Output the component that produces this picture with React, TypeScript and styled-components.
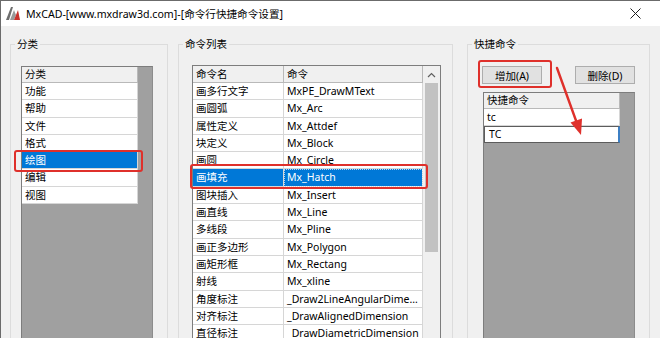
import styled, { createGlobalStyle } from 'styled-components';

const GlobalStyle = createGlobalStyle`
  html, body {
    margin: 0;
    padding: 0;
    background: #f0f0f0;
  }
  * {
    box-sizing: border-box;
  }
`;

const FONT = `"Noto Sans", "Noto Sans CJK SC", sans-serif`;

const Window = styled.div`
  position: relative;
  width: 660px;
  height: 338px;
  overflow: hidden;
  display: flex;
  flex-direction: column;
  background: #f0f0f0;
  border-top: 1px solid #6b6b6b;
  border-left: 1px solid #6b6b6b;
  font-family: ${FONT};
  font-size: 10.5px;
  color: #000;
`;

const TitleBar = styled.div`
  flex-shrink: 0;
  height: 25px;
  display: flex;
  align-items: center;
  padding-left: 4px;
  background: #fff;
`;

const TitleText = styled.span`
  margin-left: 5px;
  font-size: 10.6px;
  white-space: nowrap;
`;

const CloseIcon = styled.svg`
  margin-left: auto;
  margin-right: 19px;
`;

const Body = styled.div`
  display: flex;
  align-items: flex-start;
  padding: 11px 0 0 9px;
`;

const Group = styled.fieldset<{ $w: number; $mr: number }>`
  flex-shrink: 0;
  width: ${(p) => p.$w}px;
  height: 330px;
  margin: 0 ${(p) => p.$mr}px 0 0;
  padding: 0;
  min-width: 0;
  border: 1px solid #dcdcdc;
`;

const Legend = styled.legend`
  margin-left: 4px;
  padding: 0 2px;
  line-height: 14px;
  font-size: 10.5px;
`;

const GroupInner = styled.div<{ $pt: number; $pl: number }>`
  display: flex;
  flex-direction: column;
  align-items: flex-start;
  padding: ${(p) => p.$pt}px 0 0 ${(p) => p.$pl}px;
`;

const Grid = styled.div<{ $w: number }>`
  width: ${(p) => p.$w}px;
  height: 320px;
  background: #a0a0a0;
  border: 1px solid #7d7d7d;
  border-right-color: #8c8c8c;
`;

const GridRow = styled.div<{ $w: number }>`
  display: flex;
  width: ${(p) => p.$w}px;
`;

const Cell = styled.div<{ $w?: number; $h?: number; $head?: boolean; $sel?: boolean; $focus?: boolean }>`
  flex: ${(p) => (p.$w ? `0 0 ${p.$w}px` : '1 1 auto')};
  height: ${(p) => p.$h ?? 17.3}px;
  line-height: ${(p) => (p.$h ?? 17.3) - 1}px;
  padding-left: 3px;
  white-space: nowrap;
  overflow: hidden;
  text-overflow: ellipsis;
  background: ${(p) => (p.$head ? '#f0f0f0' : p.$sel ? '#0078d7' : '#fff')};
  color: ${(p) => (p.$sel ? '#fff' : '#000')};
  border-right: 1px solid ${(p) => (p.$head ? '#b9b9b9' : '#d6d6d6')};
  border-bottom: 1px solid ${(p) => (p.$head ? '#b9b9b9' : '#d6d6d6')};
  outline: ${(p) => (p.$focus ? '1px dotted rgba(255,255,255,0.7)' : 'none')};
  outline-offset: -1px;
`;

const EditCell = styled.div`
  flex: 1 1 auto;
  height: 17px;
  line-height: 15px;
  padding-left: 4px;
  background: #fff;
  border: 1px solid #5c5c5c;
  border-right: 2px solid #3c7fc4;
`;

const TableWrap = styled.div`
  display: flex;
  width: 249px;
  height: 320px;
  background: #fff;
  border: 1px solid #7d7d7d;
`;

const Table = styled.div`
  width: 230px;
  display: flex;
  flex-direction: column;
`;

const ScrollBar = styled.div`
  width: 17px;
  display: flex;
  flex-direction: column;
  align-items: center;
  background: #f0f0f0;
`;

const ScrollArrow = styled.div`
  height: 17px;
  display: flex;
  align-items: center;
  justify-content: center;
`;

const Thumb = styled.div`
  width: 13px;
  height: 169px;
  background: #c2c2c2;
`;

const ButtonRow = styled.div`
  display: flex;
  gap: 33px;
`;

const Button = styled.button`
  width: 60px;
  height: 18px;
  padding: 0;
  background: #e1e1e1;
  border: 1px solid #adadad;
  font-family: ${FONT};
  font-size: 10.5px;
  color: #000;
`;

const ShortcutList = styled(Grid)`
  margin: 8px 0 0 1px;
`;

const RedBox = styled.div<{ $x: number; $y: number; $w: number; $h: number }>`
  position: absolute;
  left: ${(p) => p.$x}px;
  top: ${(p) => p.$y}px;
  width: ${(p) => p.$w}px;
  height: ${(p) => p.$h}px;
  border: 2px solid #df302b;
  border-radius: 3px;
  pointer-events: none;
`;

const Overlay = styled.svg`
  position: absolute;
  left: 0;
  top: 0;
  pointer-events: none;
`;

const categories = ['功能', '帮助', '文件', '格式', '绘图', '编辑', '视图'];

const commands: [string, string][] = [
  ['画多行文字', 'MxPE_DrawMText'],
  ['画圆弧', 'Mx_Arc'],
  ['属性定义', 'Mx_Attdef'],
  ['块定义', 'Mx_Block'],
  ['画圆', 'Mx_Circle'],
  ['画填充', 'Mx_Hatch'],
  ['图块插入', 'Mx_Insert'],
  ['画直线', 'Mx_Line'],
  ['多线段', 'Mx_Pline'],
  ['画正多边形', 'Mx_Polygon'],
  ['画矩形框', 'Mx_Rectang'],
  ['射线', 'Mx_xline'],
  ['角度标注', '_Draw2LineAngularDimension'],
  ['对齐标注', '_DrawAlignedDimension'],
  ['直径标注', '_DrawDiametricDimension'],
];

const Logo = () => (
  <svg width="16" height="15" viewBox="0 0 16 15">
    <polygon points="1,14 6,1 8,1 4,14" fill="#6e6e6e" />
    <polygon points="5,14 9,4 11,9 9,14" fill="#9a9a9a" />
    <polygon points="9,14 13,4 15,14" fill="#c8322c" />
  </svg>
);

const App = () => {
  return (
    <>
      <GlobalStyle />
      <Window>
        <TitleBar>
          <Logo />
          <TitleText>MxCAD-[www.mxdraw3d.com]-[命令行快捷命令设置]</TitleText>
          <CloseIcon width="11" height="11" viewBox="0 0 11 11">
            <path d="M0.5 0.5L10.5 10.5M10.5 0.5L0.5 10.5" stroke="#1e1e1e" strokeWidth="1" />
          </CloseIcon>
        </TitleBar>
        <Body>
          <Group $w={158} $mr={10}>
            <Legend>分类</Legend>
            <GroupInner $pt={15} $pl={10}>
              <Grid $w={132}>
                <GridRow $w={116}>
                  <Cell $head $h={16}>分类</Cell>
                </GridRow>
                {categories.map((c) => (
                  <GridRow key={c} $w={116}>
                    <Cell $sel={c === '绘图'}>{c}</Cell>
                  </GridRow>
                ))}
              </Grid>
            </GroupInner>
          </Group>

          <Group $w={275} $mr={14}>
            <Legend>命令列表</Legend>
            <GroupInner $pt={14} $pl={13}>
              <TableWrap>
                <Table>
                  <GridRow $w={230}>
                    <Cell $head $w={91} $h={17}>命令名</Cell>
                    <Cell $head $h={17}>命令</Cell>
                  </GridRow>
                  {commands.map(([name, cmd]) => {
                    const sel = cmd === 'Mx_Hatch';
                    return (
                      <GridRow key={cmd} $w={230}>
                        <Cell $w={91} $sel={sel}>{name}</Cell>
                        <Cell $sel={sel} $focus={sel}>{cmd}</Cell>
                      </GridRow>
                    );
                  })}
                </Table>
                <ScrollBar>
                  <ScrollArrow>
                    <svg width="9" height="6" viewBox="0 0 9 6">
                      <path d="M1 5L4.5 1.5L8 5" stroke="#606060" strokeWidth="1.2" fill="none" />
                    </svg>
                  </ScrollArrow>
                  <Thumb />
                </ScrollBar>
              </TableWrap>
            </GroupInner>
          </Group>

          <Group $w={183} $mr={0}>
            <Legend>快捷命令</Legend>
            <GroupInner $pt={15} $pl={14}>
              <ButtonRow>
                <Button>增加(A)</Button>
                <Button>删除(D)</Button>
              </ButtonRow>
              <ShortcutList $w={152}>
                <GridRow $w={136}>
                  <Cell $head $h={16}>快捷命令</Cell>
                </GridRow>
                <GridRow $w={136}>
                  <Cell $h={17}>tc</Cell>
                </GridRow>
                <GridRow $w={136}>
                  <EditCell>TC</EditCell>
                </GridRow>
              </ShortcutList>
            </GroupInner>
          </Group>
        </Body>

        <RedBox $x={13} $y={149} $w={129} $h={22} />
        <RedBox $x={189} $y={163} $w={238} $h={25} />
        <RedBox $x={477} $y={59} $w={74} $h={28} />
        <Overlay width="660" height="338" viewBox="0 0 660 338">
          <path d="M556 67L575.5 121" stroke="#df302b" strokeWidth="2.4" strokeLinecap="round" />
          <polygon points="580,134 569.5,121.5 581,117.5" fill="#df302b" />
        </Overlay>
      </Window>
    </>
  );
};

export default App;
